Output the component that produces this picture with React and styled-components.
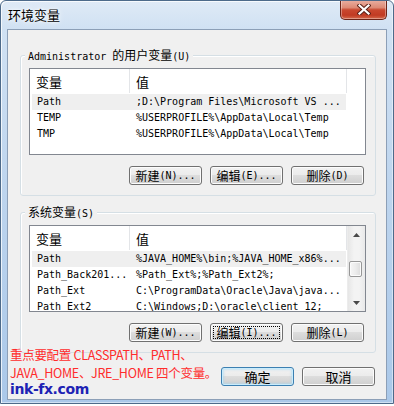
import React from 'react';
import styled, { createGlobalStyle } from 'styled-components';

const GlobalStyle = createGlobalStyle`
  html, body {
    margin: 0;
    padding: 0;
    background: #ffffff;
  }
  body {
    font-family: "Noto Sans CJK SC", sans-serif;
  }
`

const Window = styled.div`
  position: relative;
  width: 394px;
  height: 404px;
  box-sizing: border-box;
  border: 1px solid #4d6a8a;
  border-radius: 6px 6px 0 0;
  padding: 0 6px 3px 6px;
  display: flex;
  flex-direction: column;
  background: linear-gradient(to bottom, #dfeaf6 0px, #d0e1f3 28px, #bed5ee 45%, #aac8e9 100%);
  box-shadow: inset 1px 1px 0 rgba(255,255,255,0.75), inset -1px -1px 0 rgba(255,255,255,0.45);
  overflow: hidden;
`
//TitleBar
const TitleBar = styled.div`
  height: 28px;
  display: flex;
  justify-content: space-between;
  align-items: flex-start;
`
const Title = styled.div`
  padding: 6px 0 0 1px;
  font-family: "Noto Sans CJK SC", sans-serif;
  font-size: 13px;
  line-height: 16px;
  color: #000;
  text-shadow: 0 0 6px #ffffff, 0 0 3px #ffffff;
`
const CloseButton = styled.div`
  width: 47px;
  height: 20px;
  margin-top: -1px;
  box-sizing: border-box;
  border: 1px solid #6b2418;
  border-top: none;
  border-radius: 0 0 5px 5px;
  display: flex;
  align-items: center;
  justify-content: center;
  background: linear-gradient(to bottom, #eab0a2 0%, #dd8a75 40%, #c9482f 52%, #c13b23 80%, #d46a4c 100%);
  box-shadow: inset 0 0 0 1px rgba(255,255,255,0.35);
`
//Client
const Client = styled.div`
  height: 371px;
  box-sizing: border-box;
  border: 1px solid #8c9fb7;
  background: #f0f0f0;
  padding: 18px 10px 0 12px;
  display: flex;
  flex-direction: column;
`
const GroupBox = styled.fieldset`
  margin: ${props => props.top ? props.top : "0"} 0 0 0;
  width: 356px;
  min-width: 0;
  box-sizing: border-box;
  border: 1px solid #d5dfe5;
  border-radius: 3px;
  padding: 6px 9px 10px 8px;
  box-shadow: inset 1px 1px 0 #ffffff;
`
const Legend = styled.legend`
  margin-left: -4px;
  padding: 0 3px;
  height: 14px;
  line-height: 14px;
  font-family: "DejaVu Sans Mono", monospace;
  font-size: 10px;
  color: #000;
  background: #f0f0f0;
  white-space: nowrap;
`
const Han = styled.span`
  font-family: "Noto Sans CJK SC", sans-serif;
  font-size: ${props => props.size ? props.size : "12px"};
`
//ListView
const ListView = styled.div`
  height: 87px;
  box-sizing: border-box;
  border: 1px solid #828790;
  background: #ffffff;
  display: flex;
  overflow: hidden;
`
const ListBody = styled.div`
  flex: 1;
  min-width: 0;
  overflow: hidden;
`
const Header = styled.div`
  display: flex;
  height: 24px;
  margin-bottom: 1px;
`
const HeaderCell = styled.div`
  width: ${props => props.w}px;
  flex: ${props => props.w ? "none" : "1"};
  box-sizing: border-box;
  border-right: ${props => props.w ? "1px solid #e3e5e8" : "none"};
  padding: 2px 0 0 6px;
  font-family: "Noto Sans CJK SC", sans-serif;
  font-size: 13px;
  line-height: 22px;
  color: #000;
`
const Row = styled.div`
  display: flex;
  width: 314px;
  height: 16px;
  margin-left: 2px;
  background: ${props => props.selected ? "#efefef" : "transparent"};
  font-family: "DejaVu Sans Mono", monospace;
  font-size: 10px;
  line-height: 16px;
  color: #000;
  white-space: nowrap;
`
const NameCell = styled.div`
  width: 98px;
  box-sizing: border-box;
  padding-left: 5px;
  overflow: hidden;
`
const ValueCell = styled.div`
  flex: 1;
  padding-left: 6px;
  overflow: hidden;
`
//Scrollbar
const ScrollBar = styled.div`
  width: 17px;
  display: flex;
  flex-direction: column;
  background: linear-gradient(to right, #e6e6e6 0%, #f3f3f3 35%, #f3f3f3 65%, #e9e9e9 100%);
  border-left: 1px solid #ececec;
`
const ArrowButton = styled.div`
  height: 17px;
  display: flex;
  align-items: center;
  justify-content: center;
`
const Track = styled.div`
  flex: 1;
  padding: ${props => props.offset}px 0 0 1px;
`
const Thumb = styled.div`
  width: 13px;
  height: 16px;
  box-sizing: border-box;
  border: 1px solid #979797;
  border-radius: 2px;
  background: linear-gradient(to right, #f6f6f6 0%, #ececec 50%, #dcdcdc 100%);
  box-shadow: inset 0 0 0 1px #fbfbfb;
`
//Buttons
const ButtonRow = styled.div`
  display: flex;
  justify-content: flex-end;
  gap: 8px;
  margin-top: ${props => props.top ? props.top : "11px"};
  padding-right: ${props => props.right ? props.right : "2px"};
`
const Button = styled.div`
  width: 73px;
  height: 19px;
  box-sizing: border-box;
  border: 1px solid ${props => props.primary ? "#3c7fb1" : "#707070"};
  border-radius: 3px;
  display: flex;
  align-items: center;
  justify-content: center;
  background: linear-gradient(to bottom, #f2f2f2 0%, #ebebeb 49%, #dddddd 50%, #cfcfcf 100%);
  box-shadow: ${props => props.primary
    ? "inset 0 0 0 1px #c9ecfc, inset 0 0 2px 2px rgba(160,215,245,0.5)"
    : "inset 0 0 0 1px #fcfcfc"};
  outline: ${props => props.focused ? "1px dotted #000" : "none"};
  outline-offset: -4px;
  font-family: "DejaVu Sans Mono", monospace;
  font-size: 10px;
  line-height: 17px;
  color: #000;
  white-space: nowrap;
`
//Overlay annotation
const Note = styled.div`
  position: absolute;
  left: 9px;
  top: 345px;
  font-family: "Noto Sans CJK SC", sans-serif;
  font-size: 12.5px;
  letter-spacing: -0.3px;
  line-height: 18px;
  color: #ff2c2c;
  white-space: nowrap;
`
const Watermark = styled.div`
  position: absolute;
  left: 9px;
  top: 379px;
  font-family: "DejaVu Sans", sans-serif;
  font-weight: 700;
  font-size: 14px;
  line-height: 18px;
  letter-spacing: -0.4px;
  color: #1d22b4;
`

function CloseGlyph() {
  return (
    <svg width="14" height="11" viewBox="0 0 14 11">
      <path d="M2.5 1.5 L11.5 9.5 M11.5 1.5 L2.5 9.5" stroke="#5b2218" strokeWidth="4.2" strokeLinecap="square" />
      <path d="M2.5 1.5 L11.5 9.5 M11.5 1.5 L2.5 9.5" stroke="#ffffff" strokeWidth="2.2" strokeLinecap="square" />
    </svg>
  );
}

function Arrow(props) {
  return (
    <svg width="7" height="4" viewBox="0 0 7 4">
      {props.up
        ? <path d="M3.5 0 L7 4 L0 4 Z" fill="#4a4a4a" />
        : <path d="M0 0 L7 0 L3.5 4 Z" fill="#4a4a4a" />}
    </svg>
  );
}

function VarList(props) {
  return (
    <ListView>
      <ListBody>
        <Header>
          <HeaderCell w={100}>变量</HeaderCell>
          <HeaderCell w={217}>值</HeaderCell>
          <HeaderCell />
        </Header>
        {props.rows.map((r, i) => (
          <Row key={r.name} selected={i === 0}>
            <NameCell>{r.name}</NameCell>
            <ValueCell>{r.value}</ValueCell>
          </Row>
        ))}
      </ListBody>
      {props.scroll && (
        <ScrollBar>
          <ArrowButton><Arrow up /></ArrowButton>
          <Track offset={18}><Thumb /></Track>
          <ArrowButton><Arrow /></ArrowButton>
        </ScrollBar>
      )}
    </ListView>
  );
}

function ActionButtons(props) {
  const [a, b, c] = props.keys
  return (
    <ButtonRow>
      <Button><Han>新建</Han>({a})...</Button>
      <Button focused={props.focusEdit}><Han>编辑</Han>({b})...</Button>
      <Button><Han>删除</Han>({c})</Button>
    </ButtonRow>
  );
}

const userRows = [
  { name: "Path", value: ";D:\\Program Files\\Microsoft VS ..." },
  { name: "TEMP", value: "%USERPROFILE%\\AppData\\Local\\Temp" },
  { name: "TMP", value: "%USERPROFILE%\\AppData\\Local\\Temp" },
]

const systemRows = [
  { name: "Path", value: "%JAVA_HOME%\\bin;%JAVA_HOME_x86%..." },
  { name: "Path_Back201...", value: "%Path_Ext%;%Path_Ext2%;" },
  { name: "Path_Ext", value: "C:\\ProgramData\\Oracle\\Java\\java..." },
  { name: "Path_Ext2", value: "C:\\Windows;D:\\oracle\\client_12;" },
]

function App() {
  return (
    <>
      <GlobalStyle />
      <Window>
        <TitleBar>
          <Title>环境变量</Title>
          <CloseButton><CloseGlyph /></CloseButton>
        </TitleBar>
        <Client>
          <GroupBox>
            <Legend>Administrator <Han>的用户变量</Han>(U)</Legend>
            <VarList rows={userRows} />
            <ActionButtons keys={["N", "E", "D"]} />
          </GroupBox>
          <GroupBox top="9px">
            <Legend><Han>系统变量</Han>(S)</Legend>
            <VarList rows={systemRows} scroll />
            <ActionButtons keys={["W", "I", "L"]} focusEdit />
          </GroupBox>
          <ButtonRow top="14px" right="1px">
            <Button primary><Han size="13px">确定</Han></Button>
            <Button><Han size="13px">取消</Han></Button>
          </ButtonRow>
        </Client>
        <Note>
          重点要配置 CLASSPATH、PATH、<br />
          JAVA_HOME、JRE_HOME 四个变量。
        </Note>
        <Watermark>ink-fx.com</Watermark>
      </Window>
    </>
  );
}

export default App;
